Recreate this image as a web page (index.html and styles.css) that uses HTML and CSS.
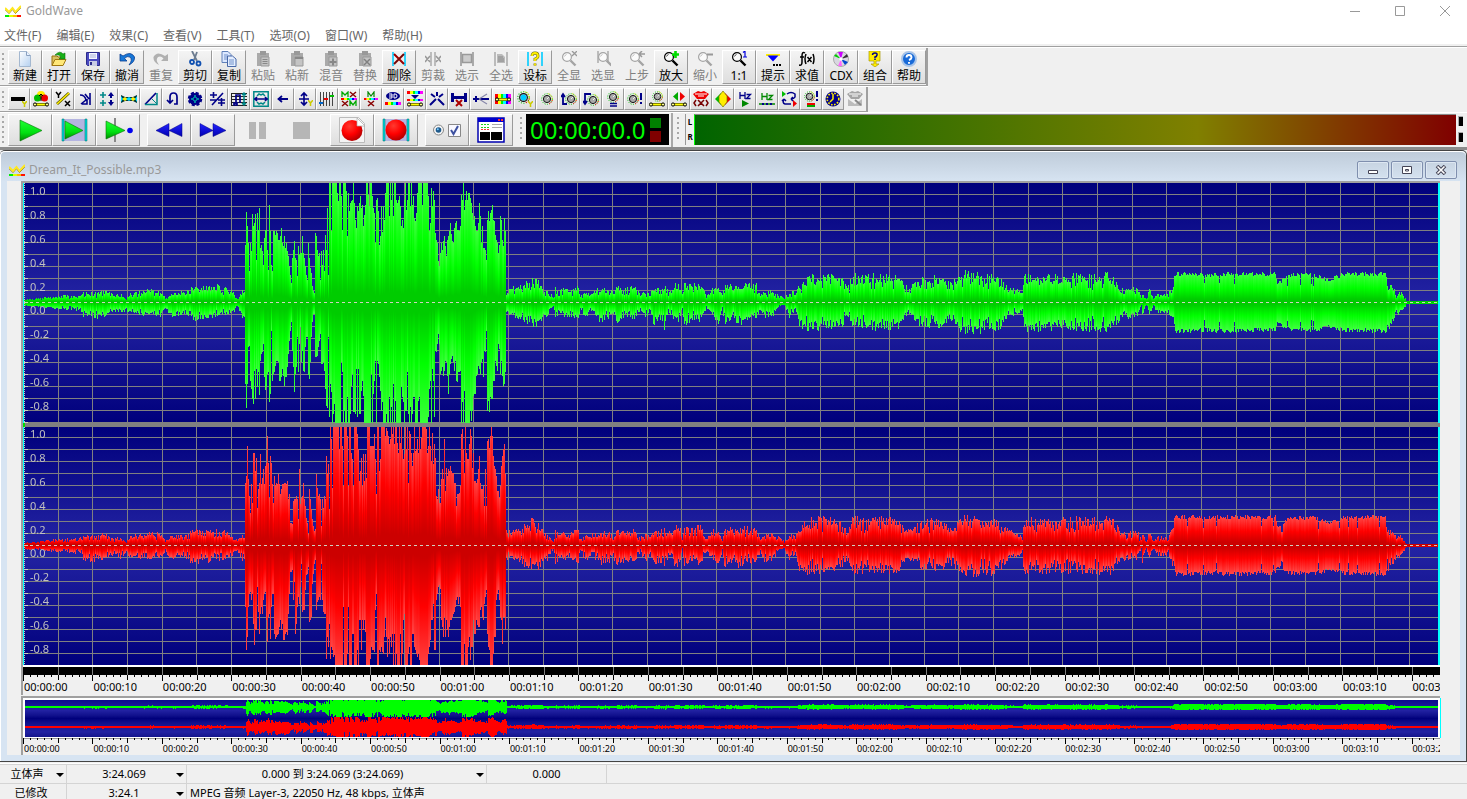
FILE: index.html
```html
<!DOCTYPE html>
<html lang="zh-CN">
<head>
<meta charset="utf-8">
<title>GoldWave</title>
<link rel="stylesheet" href="styles.css">
</head>
<body>
<svg class="defs" aria-hidden="true">
  <defs>
    <radialGradient id="gRed" cx=".38" cy=".3" r=".8"><stop offset="0" stop-color="#ff3a30"/><stop offset=".5" stop-color="#f00"/><stop offset="1" stop-color="#a00000"/></radialGradient>
    <linearGradient id="gGreen" x1="0" y1="0" x2="0" y2="1"><stop offset="0" stop-color="#1eff32"/><stop offset=".6" stop-color="#00e010"/><stop offset="1" stop-color="#008a00"/></linearGradient>
    <linearGradient id="gBlue" x1="0" y1="0" x2="0" y2="1"><stop offset="0" stop-color="#2222ff"/><stop offset="1" stop-color="#0000b0"/></linearGradient>
    <linearGradient id="gPage" x1="0" y1="0" x2="1" y2="1"><stop offset="0" stop-color="#fff"/><stop offset="1" stop-color="#b4d0f0"/></linearGradient>
    <symbol id="logo" viewBox="0 0 16 12"><path d="M0 3l4 4 3.500-4 3 4L16 1" fill="none" stroke="#807010" stroke-width="1" transform="translate(0 1.500)"/><path d="M0 3l4 4 3.500-4 3 4L16 1" fill="none" stroke="#ffe820" stroke-width="2"/><path d="M0 10h4v2H0z" fill="#0e0"/><path d="M4 10h4v2H4z" fill="#df0"/><path d="M8 10h4v2H8z" fill="#fb0"/><path d="M12 10h4v2h-4z" fill="#f10"/></symbol>
    <symbol id="rainbow" viewBox="0 0 16 3" preserveAspectRatio="none"><path fill="#f00" d="M0 0h3v3H0z"/><path fill="#ff0" d="M3 0h3v3H3z"/><path fill="#0e0" d="M6 0h2v3H6z"/><path fill="#0ff" d="M8 0h3v3H8z"/><path fill="#00f" d="M11 0h2v3h-2z"/><path fill="#f0f" d="M13 0h3v3h-3z"/></symbol>
    <symbol id="slider" viewBox="0 0 16 5"><path d="M2 2.500h12" stroke="#880" stroke-width="3"/><path d="M3 2.500h10" stroke="#ff0"/><circle cx="2" cy="2.500" r="1.600" fill="#ff8" stroke="#000"/><circle cx="14" cy="2.500" r="1.600" fill="#ff8" stroke="#000"/></symbol>
    <symbol id="knob" viewBox="0 0 12 12"><circle cx="6" cy="6" r="5.300" fill="none" stroke="#0b0" stroke-width="1" stroke-dasharray="1 1.400"/><path d="M7 .7a5.300 5.300 0 0 1 4 7" fill="none" stroke="#dd0" stroke-dasharray="1 1"/><path d="M11.300 7a5 5 0 0 1-4 4" fill="none" stroke="#f00" stroke-dasharray="1 1"/><circle cx="6" cy="6" r="3.600" fill="#aaa" stroke="#111"/><path d="M6 6l2-2" stroke="#eee"/></symbol>
    <symbol id="mag" viewBox="0 0 16 16"><circle cx="6" cy="6" r="4.400" fill="#fff" fill-opacity=".7" stroke="currentColor" stroke-width="1.200"/><path d="M9.500 9.500l5 5" stroke="currentColor" stroke-width="2.400"/><path d="M3.500 5.500Q4 4 5.500 3.500" fill="none" stroke="currentColor" stroke-width=".7"/></symbol>
    <symbol id="clip" viewBox="0 0 16 16"><path d="M2 2h12v13H2z" fill="#aaa"/><path d="M5 0h6v4H5z" fill="#999"/><path d="M6 6h8v9H6z" fill="#c4c4c4" stroke="#999"/></symbol>
    <symbol id="drop" viewBox="0 0 5 6"><path d="M0 0l2.500 3L5 0M2.500 3v3" fill="none" stroke="#cc0" stroke-width="1.500"/></symbol>
    <symbol id="lips" viewBox="0 0 16 9"><path d="M0 3l5-3 3 1 3-1 5 3-4 5H4z" fill="currentColor"/><path d="M2 3h12M5 5h6" stroke="#fff" stroke-width="1"/></symbol>
  </defs>
</svg>

<header class="titlebar">
  <svg class="logo"><use href="#logo"/></svg>
  <h1>GoldWave</h1>
  <div class="caption">
    <button aria-label="最小化"><svg viewBox="0 0 10 10"><path d="M0 5.500h10"/></svg></button>
    <button aria-label="最大化"><svg viewBox="0 0 10 10"><path d="M.5.5h9v9h-9z"/></svg></button>
    <button aria-label="关闭"><svg viewBox="0 0 10 10"><path d="M0 0l10 10M10 0L0 10"/></svg></button>
  </div>
</header>
<nav class="menubar">
  <button>文件(F)</button><button>编辑(E)</button><button>效果(C)</button><button>查看(V)</button><button>工具(T)</button><button>选项(O)</button><button>窗口(W)</button><button>帮助(H)</button>
</nav>

<div class="docks">
<div class="toolbar main-tools"><i class="grip"></i>
  <button><svg viewBox="0 0 16 16"><path d="M2.500.5h7l4 4v11h-11z" fill="url(#gPage)" stroke="#a4b8d0"/><path d="M9.500.5v4h4" fill="#e8f2ff" stroke="#8aa0c0"/></svg>新建</button>
  <button><svg viewBox="0 0 16 16"><path d="M1 14.500V5h5l1 1h5v3" fill="#d8c060" stroke="#987010"/><path d="M1 14.500L4 8.500h11l-3 6z" fill="#ffe878" stroke="#a07810"/><path d="M4 4q5-5 8-1l2-1v6H8l2-2q-2-3-6-2z" fill="#18b018" stroke="#0a700a" stroke-width=".6"/></svg>打开</button>
  <button><svg viewBox="0 0 16 16"><path d="M1.500 1.500h13v13h-12l-1-1z" fill="#4a4ac0" stroke="#2c2c8a"/><path d="M4 2h8v6H4z" fill="#f4f6ff"/><path d="M5 4h6M5 6h6" stroke="#a8b0d8"/><path d="M4 10h8v5H4z" fill="#c8cce4"/><path d="M5 11h2v3H5z" fill="#2c2c8a"/></svg>保存</button>
  <button><svg viewBox="0 0 16 16"><path d="M1 3v7h7L5.500 7.500Q8 4.500 11 6q3 3-1 8Q16 11 15.500 6 12-.5 4 5z" fill="#1878d8" stroke="#0a3c90" stroke-width=".8"/></svg>撤消</button>
  <button disabled><svg viewBox="0 0 16 16"><path d="M15 3v7H8l2.500-2.500Q8 4.500 5 6 2 9 6 14 0 11 .5 6 4-.5 12 5z" fill="#b0b0b0"/></svg>重复</button>
  <button><svg viewBox="0 0 16 16"><path d="M5 0l5 10M10 1L7 9" stroke="#6c7c90" stroke-width="1.800"/><circle cx="5" cy="11" r="2" fill="none" stroke="#1050b0" stroke-width="1.800"/><circle cx="11.500" cy="12.500" r="2" fill="none" stroke="#1050b0" stroke-width="1.800"/></svg>剪切</button>
  <button><svg viewBox="0 0 16 16"><path d="M1 .5h6l3 3v8H1z" fill="#dce8ff" stroke="#6080b8"/><path d="M6.500 5h5l3.500 3v7.500H6.500z" fill="#e4eeff" stroke="#4868a8"/><path d="M3 4h4M3 6h3M3 8h3M8 9h5M8 11h5M8 13h5" stroke="#7090c8"/></svg>复制</button>
  <button disabled><svg viewBox="0 0 16 16"><use href="#clip"/><path d="M7.500 8.500h5m-5 2h5m-5 2h5" stroke="#888"/></svg>粘贴</button>
  <button disabled><svg viewBox="0 0 16 16"><use href="#clip"/><path d="M6 6h8v2H6z" fill="#888"/></svg>粘新</button>
  <button disabled><svg viewBox="0 0 16 16"><use href="#clip"/><path d="M10 7.500v7m-3.500-3.500h7" stroke="#888" stroke-width="2"/></svg>混音</button>
  <button disabled><svg viewBox="0 0 16 16"><use href="#clip"/><path d="M7 8l6 6m0-6l-6 6" stroke="#808080" stroke-width="1.500"/></svg>替换</button>
  <button><svg viewBox="0 0 16 16"><path d="M2 1v14M14 1v14" stroke="#0cf" stroke-width="1.600"/><path d="M3 3l10 10M13 3L3 13" stroke="#900" stroke-width="2"/><path d="M3 13l10-10" stroke="#222" stroke-width=".6"/></svg>删除</button>
  <button disabled><svg viewBox="0 0 16 16"><path d="M6 1v14M10 1v14" stroke="#aaa" stroke-width="1.500"/><path d="M0 5l5 6m0-6l-5 6m11-6l5 6m0-6l-5 6" stroke="#999" stroke-width="1.500"/></svg>剪裁</button>
  <button disabled><svg viewBox="0 0 16 16"><path d="M2 1v14M14 1v14" stroke="#aaa" stroke-width="2"/><path d="M3.500 3.500h9v8h-9z" fill="#ccc" stroke="#999" stroke-width="1.500"/></svg>选示</button>
  <button disabled><svg viewBox="0 0 16 16"><path d="M2 1v14M14 1v14" stroke="#bbb" stroke-width="2"/><path d="M4 3h5l3 3v6H4z" fill="#bbb"/><path d="M5 6h5M5 8h6M5 10h6" stroke="#888"/></svg>全选</button>
  <button><svg viewBox="0 0 16 16"><path d="M1 1v14M15 1v14" stroke="#0cf" stroke-width="1.600"/><path d="M5 5q0-3 3-3t3 3q0 2-3 3v2M8 12.500v2" fill="none" stroke="#660" stroke-width="2.800"/><path d="M5 5q0-3 3-3t3 3q0 2-3 3v2M8 12.500v2" fill="none" stroke="#fe0" stroke-width="1.800"/></svg>设标</button>
  <button disabled><svg viewBox="0 0 16 16"><use href="#mag"/><path d="M11 0l5 5m0-5l-5 5" stroke="#999" stroke-width="1.300"/></svg>全显</button>
  <button disabled><svg viewBox="0 0 16 16"><path d="M3 0v12M13 0v12" stroke="#aaa" stroke-width="1.500"/><use href="#mag" x="2"/></svg>选显</button>
  <button disabled><svg viewBox="0 0 16 16"><use href="#mag"/><path d="M10 3h6m-6 0l3-3m-3 3l3 3" stroke="#999" stroke-width="1.500"/></svg>上步</button>
  <button><svg viewBox="0 0 16 16"><use href="#mag"/><path d="M12.500 0v7M9 3.500h7" stroke="#0d0" stroke-width="2.600"/></svg>放大</button>
  <button disabled><svg viewBox="0 0 16 16"><use href="#mag"/><path d="M10 3.500h6" stroke="#999" stroke-width="2"/></svg>缩小</button>
  <button><svg viewBox="0 0 16 16"><use href="#mag"/><path d="M12 1.500l2-1.500v6m-2 0h4" fill="none" stroke="#00d" stroke-width="1.200"/></svg>1:1</button>
  <button><svg viewBox="0 0 16 16"><path d="M1 3h14v2H1z" fill="#fe0"/><path d="M2.500 4.500h11L8 10.500z" fill="#00f"/><path d="M8 13h2v2H8zM11 13h2v2h-2zM14 13h2v2h-2z"/></svg>提示</button>
  <button><svg viewBox="0 0 16 16"><path d="M6 2Q3 0 3 5v6q0 4-3 3M1 6h4M7 3Q5 8 7 13M14 3q2 5 0 10M8.500 6l4 5m0-5l-4 5" fill="none" stroke="#000" stroke-width="1.500"/></svg>求值</button>
  <button><svg viewBox="0 0 16 16"><circle cx="8" cy="8" r="7.500" fill="#d8d8e0" stroke="#aaa"/><path d="M8 8L5 1h5z" fill="#c0f"/><path d="M8 8l6-5 1 3z" fill="#333"/><path d="M8 8L1 5l2-2z" fill="#0c0"/><path d="M8 8l-3 7h4z" fill="#f6f"/><path d="M8 8l7 3-3 3z" fill="#04c"/><circle cx="8" cy="8" r="1.800" fill="#fff"/></svg>CDX</button>
  <button><svg viewBox="0 0 16 16"><path d="M2 0h11v10H9v3h3l-4 3-4-3h3v-3H2z" fill="#fe0" stroke="#a90" stroke-width=".7"/><path d="M5.500 4q0-2 2.500-2t2 2-2 2v1.500M8 8v1" fill="none" stroke="#008" stroke-width="1.500"/></svg>组合</button>
  <button><svg viewBox="0 0 16 16"><circle cx="8" cy="8" r="7" fill="#186ad8" stroke="#a8c4e8" stroke-width="2"/><path d="M5.500 6.500q0-2.500 2.500-2.500t2.500 2.500Q10.500 8 8 9M8 11v1.800" fill="none" stroke="#fff" stroke-width="1.900"/></svg>帮助</button>
</div>

<div class="toolbar fx-tools"><i class="grip"></i>
  <button aria-label="设备"><svg viewBox="0 0 16 16"><path d="M0 6h14v4H0z"/><use href="#drop" x="11" y="10" width="5" height="6"/></svg></button>
  <button aria-label="自动"><svg viewBox="0 0 16 16"><circle cx="8" cy="4" r="4" fill="#fe0"/><circle cx="4.500" cy="7" r="3.500" fill="#0b0"/><circle cx="11.500" cy="7" r="3.500" fill="#e00"/><path d="M8 3v7M6 5l2-2 2 2" stroke="#000" fill="none"/><use href="#slider" y="11" width="16" height="5"/></svg></button>
  <button aria-label="表达式"><svg viewBox="0 0 16 16"><path d="M2 13L14 2" stroke="#550" stroke-width="3"/><path d="M2 13L14 2" stroke="#fe0" stroke-width="1.500"/><path d="M1 1l2.500 3L6 1M3.500 4v3M10 10l5 5m0-5l-5 5" fill="none" stroke="#000" stroke-width="1.500"/></svg></button>
  <button aria-label="倒转"><svg viewBox="0 0 16 16"><path d="M3 4q5 0 6 5l-5 4M13 2v12M5 13h5V8M12 8L8 3" fill="none" stroke="#008" stroke-width="1.600"/></svg></button>
  <button aria-label="移位"><svg viewBox="0 0 16 16"><path d="M1 4h6M4 1v6M1 12h6M4 9v6" stroke="#088" stroke-width="1.600"/><path d="M9 5l3-4 3 4zM9 11l3 4 3-4z" fill="#008"/><path d="M12 4v3m0 2v4" stroke="#008" stroke-width="2"/></svg></button>
  <button aria-label="多普勒"><svg viewBox="0 0 16 16"><path d="M0 4l4 2h8l4-2v8l-4-2H4l-4 2z" fill="#033"/><path d="M1 8l3-2 3 2-3 2zM9 8l3-2 3 2-3 2z" fill="#fe0"/><path d="M5 8l3-2 3 2-3 2zM0 5l2 3-2 3zM16 5l-2 3 2 3z" fill="#0df"/></svg></button>
  <button aria-label="淡入"><svg viewBox="0 0 16 16"><path d="M2 13.500L13 2" stroke="#008" stroke-width="1.700"/><path d="M2 13.500h12V2" fill="none" stroke="#088" stroke-width="1.500"/><path d="M9 8l5 5" stroke="#088"/></svg></button>
  <button aria-label="回声"><svg viewBox="0 0 16 16"><path d="M5 12V6q0-4 3.500-4T12 6v7H9M2 9l3 3 3-3" fill="none" stroke="#008" stroke-width="1.700"/></svg></button>
  <button aria-label="合唱"><svg viewBox="0 0 16 16"><circle cx="8" cy="8" r="6" fill="#008" stroke="#008" stroke-width="2.500" stroke-dasharray="3 1.700"/><path d="M8 4v8M4 8h8" stroke="#0aa" stroke-width="1.500"/><circle cx="8" cy="8" r="2" fill="#008" stroke="#0aa"/></svg></button>
  <button aria-label="插值"><svg viewBox="0 0 16 16"><path d="M1 4h7M4.500 1v6M1 9h6M3 14L14 2M9 9h7M9 12h7M12.500 7v8" stroke="#008" stroke-width="1.600"/></svg></button>
  <button aria-label="均衡"><svg viewBox="0 0 16 16"><path d="M0 2.500h16M0 5.500h16M0 8.500h16M0 11.500h16M0 14.500h16M.5 2v12" stroke="#222"/><path d="M5 13V4h4v8M3 12h3v2H3z" stroke="#008" fill="none" stroke-width="1.700"/><path d="M13 2v12M11 4l2-2 2 2M11 12l2 2 2-2" stroke="#088" fill="none" stroke-width="1.500"/></svg></button>
  <button aria-label="时间"><svg viewBox="0 0 16 16"><path d="M.8.8h14.400v14.400H.8z" fill="none" stroke="#088" stroke-width="1.500"/><path d="M1 8h14M4 6L2 8l2 2m8-4l2 2-2 2" fill="none" stroke="#008" stroke-width="1.600"/><path d="M4 5l2-2 2 1 2-1 2 2M4 11l2 2 2-1 2 1 2-2" fill="none" stroke="#088" stroke-width="1.500"/></svg></button>
  <button aria-label="反向"><svg viewBox="0 0 16 16"><path d="M3 8h10M7 5L3.500 8 7 11" fill="none" stroke="#008" stroke-width="1.800"/></svg></button>
  <button aria-label="偏移"><svg viewBox="0 0 16 16"><path d="M7 2v12M2 8h10M4 5l3-3 3 3M4 11l3 3 3-3" fill="none" stroke="#008" stroke-width="1.700"/><use href="#drop" x="11" y="9" width="5" height="6"/></svg></button>
  <button aria-label="均衡器"><svg viewBox="0 0 16 16"><path d="M1.500 1v14m3-14v14m3-14v14m3-14v14m3-14v14" stroke="#444"/><path d="M0 11h4v2H0z" fill="#06c"/><path d="M5 7h4v2H5z" fill="#e00"/><path d="M11 4h4v2h-4z" fill="#0b0"/></svg></button>
  <button aria-label="频谱滤波"><svg viewBox="0 0 16 16"><use href="#rainbow" y="7" width="16" height="2"/><path d="M1 6V1l3 3 3-3v5M9 15v-5l3 4 3-4v5" fill="none" stroke="#0a0" stroke-width="1.300"/><path d="M9 1l6 5m0-5L9 6M1 10l6 5m0-5l-6 5" stroke="#800" stroke-width="1.400"/></svg></button>
  <button aria-label="带通"><svg viewBox="0 0 16 16"><use href="#rainbow" x="1" y="7" width="14" height="2"/><path d="M5 6V1l3 4 3-4v5" fill="none" stroke="#080" stroke-width="1.200"/><path d="M5 10l6 5m0-5l-6 5" stroke="#800" stroke-width="1.500"/></svg></button>
  <button aria-label="三维"><svg viewBox="0 0 16 16"><ellipse cx="8" cy="5" rx="7" ry="4" fill="#008"/><path d="M4 3h3v4H4M4 5h3M9 3h1q2 0 2 2t-2 2H9z" stroke="#fff" fill="none"/><use href="#rainbow" y="11" width="16" height="3"/></svg></button>
  <button aria-label="参数"><svg viewBox="0 0 16 16"><use href="#rainbow" y="0" width="16" height="3"/><path d="M4 4h8L8 8z" fill="#008"/><use href="#rainbow" y="8" width="16" height="2"/><use href="#slider" y="11" width="16" height="5"/></svg></button>
  <button aria-label="爆破音"><svg viewBox="0 0 16 16"><path d="M8 1v4M2 3l4 3M14 3l-4 3M7 8l-6 6M9 8l6 6" stroke="#008" stroke-width="2"/></svg></button>
  <button aria-label="静音"><svg viewBox="0 0 16 16"><path d="M0 2h3v3h10V2h3v9h-3V8H3v3H0z" fill="#008"/><path d="M5 9l6 6m0-6l-6 6" stroke="#a00" stroke-width="2"/></svg></button>
  <button aria-label="降噪"><svg viewBox="0 0 16 16"><path d="M0 8h16M3 5v6M1 7v2" stroke="#008" stroke-width="2"/><path d="M6 8l8-5M6 8l8 5" stroke="#88a" stroke-width="1.200"/></svg></button>
  <button aria-label="平滑"><svg viewBox="0 0 16 16"><use href="#rainbow" y="3" width="16" height="10"/><use href="#slider" y="6" width="16" height="5"/></svg></button>
  <button aria-label="音量"><svg viewBox="0 0 16 16"><use href="#knob" x="0" y="0" width="13" height="13"/><circle cx="6.500" cy="6.500" r="3" fill="#0cf"/><use href="#drop" x="11" y="10" width="5" height="6"/></svg></button>
  <button aria-label="改变音量"><svg viewBox="0 0 16 16"><use href="#knob" x="2" y="2" width="12" height="12"/></svg></button>
  <button aria-label="淡出音量"><svg viewBox="0 0 16 16"><use href="#knob" x="4" y="2" width="12" height="12"/><path d="M6 13H2V4M0 6l2-3 2 3" fill="none" stroke="#008" stroke-width="1.800"/></svg></button>
  <button aria-label="淡入音量"><svg viewBox="0 0 16 16"><use href="#knob" x="4" y="3" width="12" height="12"/><path d="M8 3H2v9M0 10l2 3 2-3" fill="none" stroke="#008" stroke-width="1.800"/></svg></button>
  <button aria-label="匹配音量"><svg viewBox="0 0 16 16"><use href="#knob" x="2" y="0" width="12" height="12"/><path d="M5 12.500h7M5 15h7" stroke="#008" stroke-width="1.700"/></svg></button>
  <button aria-label="最大化音量"><svg viewBox="0 0 16 16"><use href="#knob" x="0" y="2" width="12" height="12"/><path d="M14 2v7m0 2v2" stroke="#008" stroke-width="2"/></svg></button>
  <button aria-label="外形音量"><svg viewBox="0 0 16 16"><use href="#knob" x="3" y="0" width="11" height="11"/><use href="#slider" y="11" width="16" height="5"/></svg></button>
  <button aria-label="声像"><svg viewBox="0 0 16 16"><path d="M7 1v9L2 5.500z" fill="#0a0"/><path d="M9 1v9l5-4.500z" fill="#e00"/><use href="#slider" y="11" width="16" height="5"/></svg></button>
  <button aria-label="人声消除"><svg class="red" viewBox="0 0 16 16"><use href="#lips" y="0" width="16" height="9"/><path d="M3 9l-2 3 2 3M13 9l2 3-2 3M5 9l6 6m0-6l-6 6" stroke="#700" stroke-width="1.500" fill="none"/></svg></button>
  <button aria-label="立体声"><svg viewBox="0 0 16 16"><path d="M6 2v12L0 8z" fill="#0b0"/><path d="M10 2v12l6-6z" fill="#e00"/><path d="M8 0l4 5v6l-4 5-4-5V5z" fill="#fe0" stroke="#770" stroke-width=".7"/></svg></button>
  <button aria-label="回放速率"><svg viewBox="0 0 16 16"><path d="M3 1v7m5-7v7M3 4.500h5M9.500 3.500h4l-4 4h4" fill="none" stroke="#008" stroke-width="1.300"/><path d="M5 9l7 3.500L5 16z" fill="#080"/></svg></button>
  <button aria-label="重新采样"><svg viewBox="0 0 16 16"><path d="M3 2v7m5-7v7M3 5.500h5M9.500 4.500h4l-4 4h4M0 13h16" fill="none" stroke="#080" stroke-width="1.300"/><path d="M3 12h2v2H3zM7 12h2v2H7zM11 12h2v2h-2z" fill="#008"/></svg></button>
  <button aria-label="交换声道"><svg viewBox="0 0 16 16"><path d="M1 0v6l4-3z" fill="#0b0"/><path d="M12 9v7l4-3.500z" fill="#e00"/><path d="M6 3q4-3 8 0v3q-1 2-4 2m0 0l2-2m-2 2l2 2M3 8q-2 4 1 5l6 0M3 8l-2 2m2-2l2 2" fill="none" stroke="#008" stroke-width="1.500"/></svg></button>
  <button aria-label="音量检测"><svg viewBox="0 0 16 16"><use href="#knob" x="1" y="0" width="11" height="11"/><path d="M14 0v6m0 2v2" stroke="#008" stroke-width="2"/><path d="M4 12h8v2H4z" fill="#e00"/><path d="M4 14h8v2H4z" fill="#0a0"/></svg></button>
  <button aria-label="时钟"><svg viewBox="0 0 16 16"><circle cx="8" cy="8" r="7.500" fill="#008"/><circle cx="8" cy="8" r="5.800" fill="none" stroke="#fe0" stroke-width="1.600" stroke-dasharray="1.600 1.500"/><path d="M8 3v5l-3 3" stroke="#fe0" stroke-width="1.500" fill="none"/></svg></button>
  <button disabled aria-label="语音"><svg viewBox="0 0 16 16"><use href="#lips" y="0" width="16" height="9"/><path d="M1 8l7 5 7-5v7H1z" fill="#bbb"/><path d="M8 9l6 5" stroke="#888" stroke-width="2"/></svg></button>
</div>

<div class="transport">
  <div class="toolbar play-tools"><i class="grip"></i>
    <button aria-label="播放"><svg viewBox="0 0 30 26"><path d="M5 3l22 10.500L5 24z" fill="url(#gGreen)" stroke="#0a700a" stroke-width=".6"/></svg></button>
    <button aria-label="播放选区"><svg viewBox="0 0 30 26"><path d="M4 2h22v22H4z" fill="#b4b4e0"/><path d="M3 2h2v22H3zM26 2h2v22h-2z" fill="#0dd" stroke="#066" stroke-width=".5"/><path d="M6 4l18 9.500L6 22z" fill="url(#gGreen)" stroke="#0a700a" stroke-width=".6"/></svg></button>
    <button aria-label="从光标播放"><svg viewBox="0 0 30 26"><path d="M11 1h2v24h-2z" fill="#888"/><path d="M3 4l19 9.500L3 22z" fill="url(#gGreen)" stroke="#0a700a" stroke-width=".6"/><circle cx="27" cy="13.500" r="2.800" fill="#00e"/></svg></button>
    <button class="gap" aria-label="倒放"><svg viewBox="0 0 30 26"><path d="M15 6.500v13L2 13.500zM28 6.500v13l-13-6z" fill="url(#gBlue)" stroke="#000080" stroke-width=".5"/></svg></button>
    <button aria-label="快放"><svg viewBox="0 0 30 26"><path d="M2 6.500v13l13-6zM15 6.500v13l13-6z" fill="url(#gBlue)" stroke="#000080" stroke-width=".5"/></svg></button>
    <button disabled aria-label="暂停"><svg viewBox="0 0 30 26"><path d="M7 5h7v17H7zM17 5h7v17h-7z" fill="#b6b6b6"/></svg></button>
    <button disabled aria-label="停止"><svg viewBox="0 0 30 26"><path d="M7 5h17v17H7z" fill="#b6b6b6"/></svg></button>
    <button class="gap" aria-label="录音"><svg viewBox="0 0 30 26"><path d="M2.500.5h19l6 6v19h-25z" fill="#f4f4f4" stroke="#bbb"/><circle cx="15" cy="13.500" r="10.500" fill="url(#gRed)"/><path d="M20 1v8h8z" fill="#fff" stroke="#aaa" stroke-width=".7"/></svg></button>
    <button aria-label="录制选区"><svg viewBox="0 0 30 26"><path d="M4 2h22v22H4z" fill="#b4b4e0"/><path d="M2 2h2v22H2zM26 2h2v22h-2z" fill="#0dd" stroke="#066" stroke-width=".5"/><circle cx="15" cy="13" r="10.500" fill="url(#gRed)"/></svg></button>
    <button class="gap" aria-label="控制属性"><svg viewBox="0 0 30 26"><circle cx="6.500" cy="13" r="5" fill="#f4f4f4" stroke="#888"/><circle cx="6.500" cy="13" r="2.800" fill="#1e5a8c"/><circle cx="5.800" cy="12.300" r="1" fill="#7cf"/><path d="M16.500 7.500h12v12h-12z" fill="#f8f8ff" stroke="#888"/><path d="M19 13l2.500 4L26 9" fill="none" stroke="#3c50a0" stroke-width="2"/></svg></button>
    <button aria-label="控制窗口"><svg viewBox="0 0 30 26"><path d="M2 1h26v24H2z" fill="#fff" stroke="#0000b0" stroke-width="1.500"/><path d="M2 1h26v4H2z" fill="#00c"/><path d="M22 2h2v2h-2zM25 2h2v2h-2z" fill="#f33"/><path d="M5 7.500h9M5 10.500h9" stroke="#2c2" stroke-dasharray="2 1"/><path d="M5 12.500h9" stroke="#f33" stroke-dasharray="2 1"/><path d="M16 7.500h10M16 10.500h10" stroke="#aaa"/><path d="M4 15h10v8H4zM15 15h11v8H15z"/></svg></button>
  </div>
  <div class="display-dock"><i class="grip"></i>
    <output class="display"><span>00:00:00.0</span><i class="lamps"></i></output>
  </div>
  <div class="meter-dock"><i class="grip"></i>
    <div class="meter-labels"><b>L</b><b>R</b></div>
    <div class="meter"></div>
    <div class="clips"><i></i><i></i></div>
  </div>
</div>
</div>

<main class="workspace">
<section class="document">
  <header class="doc-title">
    <svg class="logo"><use href="#logo"/></svg>
    <h2>Dream_It_Possible.mp3</h2>
    <div class="doc-buttons">
      <button aria-label="最小化"><svg viewBox="0 0 12 10"><path d="M1.500 5.500h9v3h-9z" fill="#fff" stroke="#445"/></svg></button>
      <button aria-label="还原"><svg viewBox="0 0 12 10"><path d="M1.500 1.500h9v7h-9z" fill="#fff" stroke="#445"/><path d="M4.500 4.500h3v1.500h-3z" fill="none" stroke="#445"/></svg></button>
      <button aria-label="关闭"><svg viewBox="0 0 12 10"><path d="M2 1l8 8M10 1L2 9" stroke="#445" stroke-width="3.600"/><path d="M2.500 1.500l7 7M9.500 1.500l-7 7" stroke="#fff" stroke-width="1.600"/></svg></button>
    </div>
  </header>
  <div class="doc-body">
    <div class="wave-panel">
      <div class="lane left">
        <canvas data-wave="green"></canvas>
        <div class="scale"><span>1.0</span><span>0.8</span><span>0.6</span><span>0.4</span><span>0.2</span><span class="zero">0.0</span><span>-0.2</span><span>-0.4</span><span>-0.6</span><span>-0.8</span></div>
      </div>
      <div class="splitter"></div>
      <div class="lane right">
        <canvas data-wave="red"></canvas>
        <div class="scale"><span>1.0</span><span>0.8</span><span>0.6</span><span>0.4</span><span>0.2</span><span class="zero">0.0</span><span>-0.2</span><span>-0.4</span><span>-0.6</span><span>-0.8</span></div>
      </div>
      <canvas class="cue-strip" data-cues></canvas>
      <canvas class="ticks" data-ticks></canvas>
      <div class="times"></div>
    </div>
    <div class="overview-panel">
      <div class="overview"><canvas data-overview></canvas></div>
      <canvas class="ticks" data-ticks></canvas>
      <div class="times small"></div>
    </div>
  </div>
</section>
</main>

<footer class="status">
  <div class="status-row">
    <button class="c1">立体声<i></i></button><button class="c2">3:24.069<i></i></button><button class="c3">0.000 到 3:24.069 (3:24.069)<i></i></button><span class="c4">0.000</span>
  </div>
  <div class="status-row">
    <span class="c1">已修改</span><button class="c2">3:24.1<i></i></button><span class="c5">MPEG 音频 Layer-3, 22050 Hz, 48 kbps, 立体声</span>
  </div>
</footer>
<script src="wave.js"></script>
</body>
</html>
```

FILE: styles.css
```css
* { box-sizing: border-box; }
body {
  margin: 0;
  min-height: 100vh;
  overflow: hidden;
  display: flex;
  flex-direction: column;
  background: #f0f0f0;
  color: #000;
  font: 12px/16px "Noto Sans", "Noto Sans CJK SC", sans-serif;
}
button { border: 0; padding: 0; margin: 0; background: none; font: inherit; color: inherit; }
h1, h2 { margin: 0; font-size: 12px; font-weight: 400; color: #999; }
canvas { display: block; width: 100%; }
.defs { position: absolute; width: 0; height: 0; }
.logo { width: 16px; height: 12px; flex: none; }

.titlebar { display: flex; align-items: center; gap: 5px; height: 22px; padding-left: 5px; background: #fff; }
.caption { margin-left: auto; display: flex; }
.caption button { width: 45px; height: 22px; }
.caption svg { width: 10px; height: 10px; fill: none; stroke: #999; overflow: visible; display: block; margin: 0 auto; }

.menubar { display: flex; gap: 15px; height: 22px; padding: 5px 4px 0; background: #fff; color: #666; line-height: 18px; }

.docks { margin-top: 2px; border-top: 1px solid #a0a0a0; box-shadow: inset 0 1px #fff; padding-top: 1px; display: flex; flex-direction: column; align-items: flex-start; }
.toolbar { display: flex; align-items: center; }
.grip { flex: none; width: 3px; align-self: stretch; margin: 3px 3px 3px 2px; background: radial-gradient(circle at 1px 1px, #a8a8a8 1px, transparent 1px) 0 0 / 3px 5px; }
.toolbar button { flex: none; display: flex; align-items: center; justify-content: center; border: 1px solid; border-color: #fff #9a9a9a #9a9a9a #fff; background: linear-gradient(#f4f4f4, #dedede); }
.toolbar button:disabled { border-color: transparent; background: none; color: #808080; }
.toolbar svg { flex: none; width: 16px; height: 16px; display: block; }
.toolbar button:disabled svg { color: #a4a4a4; }
.main-tools { padding: 2px 0 1px; border: solid #a0a0a0; border-width: 0 2px 1px 0; box-shadow: 0 1px #fff; }
.main-tools button { width: 34px; height: 34px; flex-direction: column; line-height: 17px; font-size: 12px; }
.fx-tools { margin-top: 1px; padding: 1px 0; border: solid #a0a0a0; border-width: 0 2px 1px 0; }
.fx-tools button { width: 22px; height: 22px; }
.fx-tools .red { color: #e00; }

.transport { align-self: stretch; display: flex; height: 38px; border-top: 1px solid #fff; border-bottom: 3px solid #8c8c8c; }
.play-tools button { width: 44px; height: 32px; }
.play-tools svg { width: 30px; height: 26px; }
.play-tools .gap { margin-left: 7px; }
.display-dock { display: flex; margin-left: 5px; padding: 1px 2px 2px 0; border-right: 2px solid #a8a8a8; }
.display { display: flex; align-items: center; justify-content: space-between; width: 143px; padding: 0 8px 0 4px; background: #000; color: #0f0; font-size: 24px; line-height: 30px; }
.lamps { width: 11px; height: 24px; background: linear-gradient(#008000 10px, #000 10px 13px, #800000 13px); }
.meter-dock { flex: 1; display: flex; padding: 1px 3px 2px 0; }
.meter-dock .grip { margin-right: 5px; margin-left: 4px; }
.meter-labels { width: 9px; display: flex; flex-direction: column; justify-content: space-around; align-items: center; border-left: 1px solid #999; font-size: 8px; line-height: 10px; }
.meter { flex: 1; border-left: 1px solid #0f0; border-top: 1px solid #888; background: linear-gradient(90deg, #006400, #808000 66%, #800000); }
.clips { width: 8px; display: flex; flex-direction: column; justify-content: space-between; padding: 2px 0 3px 2px; }
.clips i { width: 5px; height: 10px; background: #000; border: solid #aaa; border-width: 1px 0 0 1px; }

.workspace { flex: none; background: #d7e4f2; border-top: 1px solid #444; border-bottom: 1px solid #444; border-right: 1px solid #444; border-radius: 5px 5px 0 0; }
.document { border-left: 1px solid #fff; border-top: 1px solid #fff; border-radius: 5px 5px 0 0; padding: 0 6px; background: linear-gradient(#bfccda, #d7e4f2 30px); }
.doc-title { display: flex; align-items: center; gap: 4px; height: 29px; padding: 6px 3px 0 2px; }
.doc-buttons { display: flex; gap: 2px; margin-left: auto; }
.doc-buttons button { width: 32px; height: 18px; border: 1px solid #7f8fae; border-radius: 2px; box-shadow: inset 0 0 0 1px #dde7f2; display: flex; align-items: center; justify-content: center; }
.doc-buttons svg { width: 12px; height: 10px; }
.doc-body { padding: 0 20px 0 14px; background: #f0f0f0; border-bottom: 6px solid #d7e4f2; }
.wave-panel, .overview-panel { border: solid #a0a0a0; border-width: 2px 0 0 2px; background: #f0f0f0; }
.lane { position: relative; background: linear-gradient(#00007c, #2424a4 50%, #00007c); border: solid #0ff; border-width: 0 2px 0 1px; }
.left canvas { height: 240px; }
.right canvas { height: 238px; }
.splitter { height: 4px; background: #808080; border-left: 2px solid #0d0; }
.scale { position: absolute; left: 6px; top: -4px; display: flex; flex-direction: column; color: #c0c0c0; font-size: 11px; line-height: 24px; }
.scale .zero { margin-top: -1px; }
.right .scale { top: -5px; }
.cue-strip { height: 10px; border-top: 2px solid #fff; background: #000; }
.ticks { height: 7px; }
.times { display: flex; height: 13px; overflow: hidden; font-size: 11px; line-height: 10px; }
.times span { flex: 0 0 calc(100% * 10 / 204.069); white-space: nowrap; overflow: visible; padding-left: 1px; }
.overview-panel { margin-top: 1px; }
.overview { border: solid #fff; border-width: 2px 2px 1px 2px; box-shadow: 0 1px #999, 1px 0 #0ff; }
.overview canvas { height: 37px; }
.times.small { font-size: 9px; height: 10px; line-height: 8px; }

.status { flex: 1; border-top: 1px solid #fff; margin-top: 1px; font-size: 11px; }
.status-row { display: flex; height: 19px; border-top: 1px solid #d4d4d4; }
.status-row > * { position: relative; display: flex; align-items: center; justify-content: center; border-right: 1px solid #d4d4d4; white-space: nowrap; }
.status-row i { position: absolute; right: 2px; top: 8px; border: 4px solid transparent; border-top-color: #000; border-bottom: 0; }
.status-row .c1 { width: 67px; padding-right: 12px; }
.status-row span.c1 { padding-right: 4px; }
.status-row .c2 { width: 120px; padding-right: 5px; }
.status-row .c3 { width: 300px; padding-right: 8px; }
.status-row .c4 { width: 120px; }
.status-row .c5 { border: 0; padding-left: 3px; }
```

FILE: wave.js
```js
const DURATION = 204.069;

// Quiet passages: position, peak above and peak below the axis.
const quiet = [24,2,3,50,5,5,80,7,7,83,9,13,95,9,15,105,11,12,115,6,8,120,8,11,125,3,7,130,8,10,145,12,12,160,11,12,165,4,6,170,8,13,185,10,10,190,14,15,200,14,17,215,16,13,230,11,12,237,5,5,245,14,20,508,13,12,518,15,15,525,20,20,532,24,23,538,20,22,542,14,14,546,11,17,550,8,7,553,4,3,555,13,18,558,12,12,565,12,13,572,13,14,578,15,15,580,6,5,585,9,14,592,10,8,598,13,17,607,13,16,613,10,12,617,14,19,624,13,14,634,15,15,640,7,6,645,10,15,650,8,8,653,13,20,660,13,15,664,17,23,668,12,9,676,18,20,680,16,14,682,8,5,684,18,22,692,17,16,700,18,17,706,6,5,712,14,12,718,15,20,722,6,5,724,17,20,732,15,14,739,17,21,746,16,15,756,17,16,760,8,6,765,9,16,770,11,15,775,8,10,779,8,3,784,3,2,788,9,14,795,11,8,799,15,22,802,20,24,808,25,26,820,25,24,840,25,23,847,14,14,853,26,26,870,25,25,885,25,24,899,25,25,904,15,15,912,16,13,918,20,21,928,25,22,940,22,22,950,19,19,958,24,24,965,28,28,975,27,28,990,25,26,1000,21,23,1008,14,12,1018,11,10,1022,8,7,1023,24,25,1035,24,25,1045,24,25,1060,25,23,1075,26,25,1090,24,25,1105,27,27,1115,23,25,1120,12,14,1128,13,14,1137,13,12,1141,5,2,1142,12,16,1146,3,2,1149,13,11,1153,4,3,1158,8,10,1168,7,9,1172,20,20,1175,28,28,1190,28,28,1205,27,27,1230,28,28,1260,28,27,1275,28,27,1277,18,20,1290,27,27,1315,27,27,1328,22,24,1345,28,27,1385,28,28,1388,14,24,1392,16,22,1396,7,10,1400,10,11,1404,4,4,1410,1,1,1439,1,1];

// Loud passage: start position, then one pair of edges (top, bottom) per column.
const loud = {
  green: { mid: 367, runs: "45:195,610 96,683 140,610 190,500 275,495 190,600 215,625 102,655 140,670 130,570 102,655 240,565 100,620 150,575 85,643 205,540 195,520 215,515 255,490 175,590 150,628 150,620 210,580 270,575 75,665 155,640 255,450 275,600 155,580 155,575 165,555 155,541 160,541 180,545 180,600 170,600 145,590 190,565 200,585 170,615 205,590 190,590 215,560 230,520 260,480 285,450 310,425 235,510 210,560 185,635 235,580 240,560 290,470 200,575 225,490 220,440 220,545 168,510 220,570 235,575 260,500 285,470 300,470 190,584 235,595 265,545 280,470 320,425 335,400 340,400 160,530 170,530 210,525 230,500 220,480 300,460 215,550 255,550 210,545 275,570 165,625 210,675 85,681 285,470 10,710 10,610 155,635 10,725 10,700 10,670 10,725 10,725 40,725 65,725 10,725 10,725 50,545 150,575 10,725 10,690 10,725 35,725 170,650 40,725 95,725 70,700 63,615 60,580 10,695 70,695 120,700 145,565 80,710 95,565 70,700 48,700 85,630 75,600 140,645 105,725 75,725 10,725 10,725 45,725 80,725 10,725 10,580 50,725 85,640 100,600 190,540 60,725 55,540 95,550 195,590 170,630 80,690 156,665 80,725 120,725 40,725 10,700 10,725 10,725 110,650 10,725 60,680 10,725 110,610 10,725 10,660 60,725 70,725 60,725 50,725 80,725 140,620 120,650 145,665 60,725 10,690 90,690 60,575 10,700 10,725 80,680 10,725 75,700 50,650 115,650 125,725 100,725 40,725 10,660 10,650 10,725 10,725 75,725 10,725 10,725 10,725 10,725 10,725 50,710 155,625 130,600 25,725 80,565 35,600 60,710 160,510 180,515 190,490 245,460 260,490 220,580 190,570 210,560 185,585 170,570 200,540 230,545 180,585 170,640 155,580 130,550 163,535 185,525 190,545 145,570 130,540 125,600 150,605 150,575 155,575 140,570 45,725 60,665 10,725 90,630 60,725 35,725 60,725 40,725 40,725 55,690 70,720 100,690 120,645 110,640 140,640 155,585 155,580 130,555 70,565 110,580 190,545 140,535 205,590 205,510 210,515 240,450 120,690 95,660 125,695 100,650 90,655 75,655 120,600 125,600 165,540 180,555 190,570 220,490 195,505 110,580 120,540 180,585 200,615 115,610 155,575" },
  red: { mid: 377, runs: "45:190,560 170,690 80,650 180,560 230,520 280,515 195,540 250,520 100,610 100,675 155,630 115,630 265,500 210,575 190,640 105,580 195,560 175,580 150,540 195,520 140,515 130,600 50,665 130,590 235,580 110,655 130,560 195,520 250,520 170,640 200,655 190,650 195,645 165,640 195,620 225,600 210,630 195,610 195,660 190,660 190,640 195,635 185,645 240,580 225,520 310,455 312,455 315,450 245,540 240,485 240,640 230,610 240,560 300,530 150,550 255,500 235,430 230,575 190,570 240,570 260,510 295,465 310,460 345,440 210,605 240,600 270,590 300,490 320,460 335,430 330,420 165,570 205,545 230,540 225,530 240,540 320,430 240,540 265,575 230,580 240,580 110,715 165,650 135,680 270,610 15,715 60,680 205,690 15,710 15,705 15,725 15,735 15,735 20,735 90,735 15,735 15,735 80,735 200,560 15,725 15,735 15,735 50,700 200,560 15,725 15,735 100,735 120,640 200,640 15,735 15,735 15,735 45,690 90,735 185,600 155,600 115,690 200,600 105,630 185,600 105,635 175,735 15,735 15,735 15,730 80,715 80,680 80,690 80,690 45,695 120,570 225,520 15,735 15,730 155,690 120,695 15,680 15,695 15,700 15,650 50,590 25,650 35,710 50,655 75,700 60,650 15,680 45,640 15,730 75,640 15,735 20,700 70,735 100,735 15,735 70,640 15,735 90,700 120,600 105,580 15,735 90,735 15,735 190,700 35,680 45,735 100,735 140,640 100,640 15,680 95,690 90,700 60,710 100,700 15,720 90,735 55,735 20,735 15,735 15,735 15,735 30,735 100,735 80,700 15,680 80,660 125,600 40,600 135,550 75,690 115,690 230,540 240,520 210,500 250,495 250,505 180,600 150,620 180,650 60,590 215,650 145,600 170,630 150,650 155,620 140,600 155,600 160,590 160,580 190,575 190,560 260,540 225,530 225,550 220,530 200,560 45,735 30,735 90,735 160,670 15,735 100,735 120,730 120,680 75,650 30,720 50,680 145,680 100,600 185,640 185,640 190,600 180,615 150,620 110,620 190,570 210,560 210,590 200,600 260,550 150,530 260,510 65,640 60,680 85,690 50,735 15,735 50,735 110,700 140,650 150,650 170,540 215,520 215,510 235,540 200,590 140,600 110,670 90,590 75,590 165,625" }
};
const palette = {
  green: ["#00cc00", "#00ff00", "#3cff3c"],
  red: ["#cc0000", "#ff0000", "#ff4444"]
};

function noise(seed) {
  let s = seed;
  return () => {
    s = (s * 1664525 + 1013904223) % 4294967296;
    return s / 4294967296;
  };
}

// Returns 1415 columns of [up, down] peaks.
function columns(name) {
  const rnd = noise(name === "green" ? 7 : 31);
  const out = [];
  let q = 0;
  for (let i = 0; i < 1415; i++) {
    const x = 24 + i;
    while (q + 6 < quiet.length && quiet[q + 3] <= x) q += 3;
    const t = (x - quiet[q]) / (quiet[q + 3] - quiet[q]);
    const mix = k => quiet[q + k] + (quiet[q + 3 + k] - quiet[q + k]) * t;
    const finale = x > 1174 && x < 1386;
    const gate = rnd() < (finale ? 0.04 : 0.2) ? 0.65 : 1;
    const base = finale ? 0.92 : 0.74;
    const spread = finale ? 0.16 : 0.42;
    let up = mix(1) * (base + rnd() * spread) * gate;
    let down = mix(2) * (base + rnd() * spread) * gate;
    if (x > 1405) up = down = 1;
    out.push([up, down]);
  }
  const [start, list] = loud[name].runs.split(":");
  list.split(" ").forEach((pair, k) => {
    const [a, b] = pair.split(",").map(Number);
    const i = Math.round(206 + Number(start) / 3 + k);
    if (i < 482) out[i] = [(loud[name].mid - a) / 3 + (a < 20 ? 4 : 0), (b - loud[name].mid) / 3 + (b > 720 ? 4 : 0)];
  });
  return out;
}
const data = { green: columns("green"), red: columns("red") };

function prepare(canvas) {
  const w = canvas.width = Math.round(canvas.clientWidth);
  const h = canvas.height = Math.round(canvas.clientHeight);
  return [canvas.getContext("2d"), w, h];
}

function drawWave(canvas, name) {
  const [c, w, h] = prepare(canvas);
  const mid = name === "green" ? 119 : 118;
  c.fillStyle = "#808080";
  for (let s = 5; s < DURATION; s += 5) c.fillRect(Math.round(s / DURATION * w) - 1, 0, 1, h);
  for (let y = mid % 12; y < h; y += 12) c.fillRect(0, y, w, 1);
  const [low, body, tip] = palette[name];
  for (let x = 0; x < w; x++) {
    const [up, down] = data[name][Math.min(1414, Math.floor(x * 1415 / w))];
    [[up, -1], [down, 1]].forEach(([amp, dir]) => {
      const g = c.createLinearGradient(0, mid, 0, mid + dir * Math.max(amp, 6));
      g.addColorStop(0, low);
      g.addColorStop(0.1, low);
      g.addColorStop(0.5, body);
      g.addColorStop(1, tip);
      c.fillStyle = g;
      c.fillRect(x, dir < 0 ? mid - Math.round(amp) : mid, 1, Math.round(amp) + (dir > 0 ? 1 : 0));
    });
  }
  c.fillStyle = "#d0d0c0";
  for (let x = 0; x < w; x += 6) c.fillRect(x, mid, 3, 1);
  for (let y = 0; y < h; y += 2) c.fillRect(0, y, 1, 1);
  for (let y = mid % 12; y < h; y += 12) c.fillRect(0, y, 4, 1);
}

function drawOverview(canvas) {
  const [c, w, h] = prepare(canvas);
  const g = c.createLinearGradient(0, 0, 0, h);
  [[0, "#0c0c8c"], [0.28, "#2222a2"], [0.42, "#10108c"], [0.5, "#00007c"], [0.62, "#10108c"], [0.86, "#2222a2"], [1, "#14148c"]].forEach(([p, col]) => g.addColorStop(p, col));
  c.fillStyle = g;
  c.fillRect(0, 0, w, h);
  [["green", "#00ff00", 7, 0, 17], ["red", "#ff0000", 27, 17, h]].forEach(([name, col, mid, top, bottom]) => {
    c.fillStyle = col;
    for (let x = 0; x < w; x++) {
      const [up, down] = data[name][Math.min(1414, Math.floor(x * 1415 / w))];
      const y0 = Math.max(top, mid - 1 - Math.floor(up / 13));
      const y1 = Math.min(bottom, mid + 1 + Math.floor(down / 13));
      c.fillRect(x, y0, 1, y1 - y0);
    }
  });
}

function drawTicks(canvas) {
  const [c, w] = prepare(canvas);
  c.fillStyle = "#000";
  for (let s = 0; s < DURATION; s++) {
    c.fillRect(Math.max(0, Math.round(s / DURATION * w)), 0, 1, s % 10 === 0 ? 6 : s % 5 === 0 ? 5 : 2);
  }
}

function drawCues(canvas) {
  const [c, w, h] = prepare(canvas);
  c.fillStyle = "#808080";
  for (let s = 5; s < DURATION; s += 5) c.fillRect(Math.round(s / DURATION * w), 0, 1, h);
}

function drawAll() {
  document.querySelectorAll("[data-wave]").forEach(n => drawWave(n, n.dataset.wave));
  document.querySelectorAll("[data-overview]").forEach(drawOverview);
  document.querySelectorAll("[data-ticks]").forEach(drawTicks);
  document.querySelectorAll("[data-cues]").forEach(drawCues);
}

document.querySelectorAll(".times").forEach(row => {
  for (let s = 0; s < DURATION; s += 10) {
    const label = document.createElement("span");
    label.textContent = `00:${String(Math.floor(s / 60)).padStart(2, "0")}:${String(s % 60).padStart(2, "0")}`;
    row.append(label);
  }
});
drawAll();
addEventListener("resize", drawAll);
```
